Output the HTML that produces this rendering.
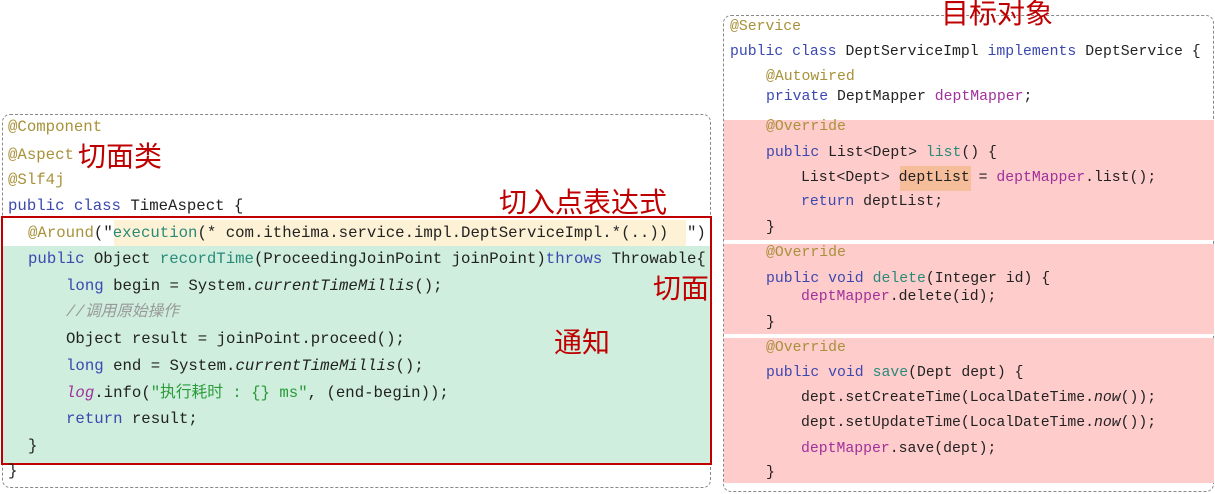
<!DOCTYPE html><html><head><meta charset="utf-8"><style>
body{margin:0;width:1215px;height:494px;background:#fff;position:relative;overflow:hidden;font-family:"Liberation Mono","Noto Sans CJK SC",monospace;}
.l{position:absolute;white-space:pre;line-height:18px;color:#222;}
.L{font-size:15.7px;}
.R{font-size:14.8px;}
.a{color:#a8913a}.k{color:#3b48b0}.m{color:#2a8a7a}.p{color:#a0309a}.s{color:#2a9a3a}.c{color:#999;font-style:italic}.i{font-style:italic}
.t{position:absolute;color:#c00000;font-family:"Noto Sans CJK SC",sans-serif;font-size:28px;line-height:32px;white-space:nowrap}
.box{position:absolute;border:1.5px dashed #888;border-radius:8px;}
.bg{position:absolute}
</style></head><body>
<div class="box" style="left:2px;top:114px;width:707px;height:372px"></div>
<div class="bg" style="left:2px;top:246px;width:708px;height:218px;background:#cfeedd"></div>
<div class="bg" style="left:114px;top:220px;width:572px;height:26px;background:#fdf2d6"></div>
<div class="bg" style="left:1px;top:216px;width:707px;height:245px;border:2px solid #c00000"></div>

<div class="box" style="left:723px;top:15px;width:489px;height:475px"></div>
<div class="bg" style="left:724px;top:120px;width:490px;height:120px;background:#ffcccc"></div>
<div class="bg" style="left:724px;top:244px;width:490px;height:90px;background:#ffcccc"></div>
<div class="bg" style="left:724px;top:338px;width:490px;height:145px;background:#ffcccc"></div>
<div class="bg" style="left:900px;top:166px;width:71px;height:25px;background:#f6bd9a"></div>

<div class="l L a" style="left:8px;top:118px">@Component</div>
<div class="l L a" style="left:8px;top:146px">@Aspect</div>
<div class="l L a" style="left:8px;top:171px">@Slf4j</div>
<div class="l L" style="left:8px;top:197px"><span class="k">public class</span> TimeAspect {</div>
<div class="l L" style="left:28px;top:224px"><span class="a">@Around</span>("<span class="m">execution</span>(* com.itheima.service.impl.DeptServiceImpl.*(..))  ")</div>
<div class="l L" style="left:28px;top:250px"><span class="k">public</span> Object <span class="m">recordTime</span>(ProceedingJoinPoint joinPoint)<span class="k">throws</span> Throwable{</div>
<div class="l L" style="left:66px;top:277px"><span class="k">long</span> begin = System.<span class="i">currentTimeMillis</span>();</div>
<div class="l L c" style="left:66px;top:303px">//调用原始操作</div>
<div class="l L" style="left:66px;top:330px">Object result = joinPoint.proceed();</div>
<div class="l L" style="left:66px;top:357px"><span class="k">long</span> end = System.<span class="i">currentTimeMillis</span>();</div>
<div class="l L" style="left:66px;top:384px"><span class="p i">log</span>.info(<span class="s">"执行耗时 : {} ms"</span>, (end-begin));</div>
<div class="l L" style="left:66px;top:410px"><span class="k">return</span> result;</div>
<div class="l L" style="left:28px;top:437px">}</div>
<div class="l L" style="left:8px;top:462px">}</div>

<div class="t" style="left:78px;top:139px">切面类</div>
<div class="t" style="left:499px;top:185px">切入点表达式</div>
<div class="t" style="left:653px;top:271px">切面</div>
<div class="t" style="left:554px;top:325px">通知</div>
<div class="t" style="left:941px;top:-4px">目标对象</div>

<div class="l R a" style="left:730px;top:18px">@Service</div>
<div class="l R" style="left:730px;top:43px"><span class="k">public class</span> DeptServiceImpl <span class="k">implements</span> DeptService {</div>
<div class="l R a" style="left:766px;top:68px">@Autowired</div>
<div class="l R" style="left:766px;top:88px"><span class="k">private</span> DeptMapper <span class="p">deptMapper</span>;</div>
<div class="l R a" style="left:766px;top:118px">@Override</div>
<div class="l R" style="left:766px;top:144px"><span class="k">public</span> List&lt;Dept&gt; <span class="m">list</span>() {</div>
<div class="l R" style="left:801px;top:169px">List&lt;Dept&gt; deptList = <span class="p">deptMapper</span>.list();</div>
<div class="l R" style="left:801px;top:193px"><span class="k">return</span> deptList;</div>
<div class="l R" style="left:766px;top:219px">}</div>
<div class="l R a" style="left:766px;top:244px">@Override</div>
<div class="l R" style="left:766px;top:270px"><span class="k">public void</span> <span class="m">delete</span>(Integer id) {</div>
<div class="l R" style="left:801px;top:288px"><span class="p">deptMapper</span>.delete(id);</div>
<div class="l R" style="left:766px;top:314px">}</div>
<div class="l R a" style="left:766px;top:339px">@Override</div>
<div class="l R" style="left:766px;top:364px"><span class="k">public void</span> <span class="m">save</span>(Dept dept) {</div>
<div class="l R" style="left:801px;top:389px">dept.setCreateTime(LocalDateTime.<span class="i">now</span>());</div>
<div class="l R" style="left:801px;top:414px">dept.setUpdateTime(LocalDateTime.<span class="i">now</span>());</div>
<div class="l R" style="left:801px;top:440px"><span class="p">deptMapper</span>.save(dept);</div>
<div class="l R" style="left:766px;top:464px">}</div>
</body></html>
